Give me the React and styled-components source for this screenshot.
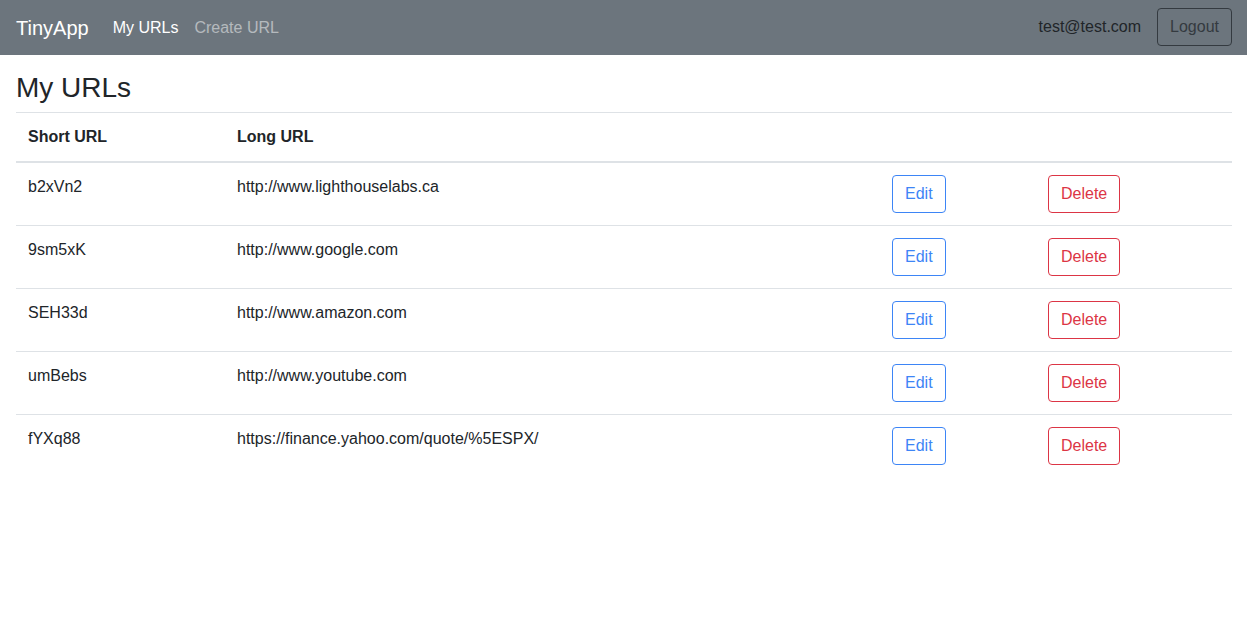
import React from 'react';
import styled, { createGlobalStyle } from 'styled-components';

const GlobalStyle = createGlobalStyle`
  body {
    margin: 0;
    font-family: "Liberation Sans", Arial, sans-serif;
    font-size: 16px;
    line-height: 1.5;
    color: #212529;
    background: #fff;
  }
`;

const Navbar = styled.nav`
  height: 55px;
  box-sizing: border-box;
  background-color: #6c757d;
  padding: 0 15px 0 16px;
  display: flex;
  align-items: center;
`;

const Brand = styled.a`
  font-size: 20px;
  line-height: 30px;
  color: #fff;
  margin-right: 16px;
  text-decoration: none;
`;

const NavLinks = styled.div`
  display: flex;
  flex: 1;
`;

const NavLink = styled.a`
  padding: 8px;
  color: ${(p) => (p.$active ? '#fff' : 'rgba(255, 255, 255, 0.5)')};
  text-decoration: none;
`;

const UserArea = styled.div`
  display: flex;
  align-items: center;
  gap: 16px;
  margin-top: -1px;
`;

const UserEmail = styled.span`
  color: #212529;
`;

const Button = styled.button`
  font-family: inherit;
  font-size: 16px;
  line-height: 24px;
  padding: 6px 12px;
  border-radius: 4px;
  background: transparent;
  border: 1px solid ${(p) => p.$color};
  color: ${(p) => p.$color};
  cursor: pointer;
`;

const Main = styled.main`
  padding: 16px 15px 0 16px;
`;

const Title = styled.h3`
  margin: 0 0 7px;
  font-size: 28px;
  font-weight: 500;
  line-height: 1.2;
`;

const Table = styled.table`
  width: 100%;
  border-collapse: collapse;
  table-layout: fixed;
`;

const Th = styled.th`
  text-align: left;
  font-weight: 700;
  padding: 12px;
  border-top: 1px solid #dee2e6;
  border-bottom: 2px solid #dee2e6;
  vertical-align: bottom;
  width: ${(p) => p.$w || 'auto'};
`;

const Td = styled.td`
  padding: 12px;
  border-top: 1px solid #dee2e6;
  vertical-align: top;
`;

const urls = [
  ['b2xVn2', 'http://www.lighthouselabs.ca'],
  ['9sm5xK', 'http://www.google.com'],
  ['SEH33d', 'http://www.amazon.com'],
  ['umBebs', 'http://www.youtube.com'],
  ['fYXq88', 'https://finance.yahoo.com/quote/%5ESPX/'],
];

const App = () => {
  return (
    <>
      <GlobalStyle />
      <Navbar>
        <Brand href="#">TinyApp</Brand>
        <NavLinks>
          <NavLink href="#" $active>My URLs</NavLink>
          <NavLink href="#">Create URL</NavLink>
        </NavLinks>
        <UserArea>
          <UserEmail>test@test.com</UserEmail>
          <Button $color="#343a40">Logout</Button>
        </UserArea>
      </Navbar>
      <Main>
        <Title>My URLs</Title>
        <Table>
          <thead>
            <tr>
              <Th $w="185px">Short URL</Th>
              <Th $w="631px">Long URL</Th>
              <Th $w="132px"></Th>
              <Th></Th>
            </tr>
          </thead>
          <tbody>
            {urls.map(([short, long]) => (
              <tr key={short}>
                <Td>{short}</Td>
                <Td>{long}</Td>
                <Td>
                  <Button $color="#3d85f6">Edit</Button>
                </Td>
                <Td>
                  <Button $color="#dc3545">Delete</Button>
                </Td>
              </tr>
            ))}
          </tbody>
        </Table>
      </Main>
    </>
  );
};

export default App;
